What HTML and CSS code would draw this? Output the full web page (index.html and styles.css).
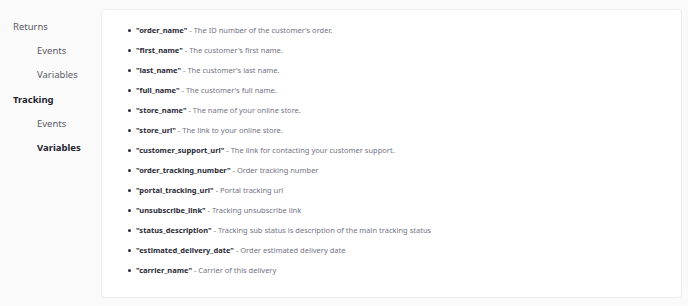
FILE: index.html
```html
<!DOCTYPE html>
<html lang="en">
<head>
<meta charset="UTF-8">
<meta name="viewport" content="width=device-width, initial-scale=1.0">
<title>Tracking variables</title>
<link rel="stylesheet" href="styles.css">
</head>
<body>

<div class="page">
<nav class="sidebar">
<a class="nav-group">Returns</a>
<a class="nav-item">Events</a>
<a class="nav-item">Variables</a>
<a class="nav-group active">Tracking</a>
<a class="nav-item">Events</a>
<a class="nav-item active">Variables</a>
</nav>

<section class="card">
<ul class="vars">
<li><b>"order_name"</b> - The ID number of the customer's order.</li>
<li><b>"first_name"</b> - The customer's first name.</li>
<li><b>"last_name"</b> - The customer's last name.</li>
<li><b>"full_name"</b> - The customer's full name.</li>
<li><b>"store_name"</b> - The name of your online store.</li>
<li><b>"store_url"</b> - The link to your online store.</li>
<li><b>"customer_support_url"</b> - The link for contacting your customer support.</li>
<li><b>"order_tracking_number"</b> - Order tracking number</li>
<li><b>"portal_tracking_url"</b> - Portal tracking url</li>
<li><b>"unsubscribe_link"</b> - Tracking unsubscribe link</li>
<li><b>"status_description"</b> - Tracking sub status is description of the main tracking status</li>
<li><b>"estimated_delivery_date"</b> - Order estimated delivery date</li>
<li><b>"carrier_name"</b> - Carrier of this delivery</li>
</ul>
</section>
</div>

</body>
</html>
```

FILE: styles.css
```css
body {
font-family: "Noto Sans", Arial, sans-serif;
background-color: #fafafa;
color: #737385;
margin: 0;
}
.page {
display: flex;
padding: 9px 6px 8px 0;
}
.sidebar {
width: 101px;
flex: none;
display: flex;
flex-direction: column;
padding-top: 10px;
font-size: 9.5px;
}
.sidebar a {
height: 24.2px;
line-height: 16px;
color: #5a5a66;
}
.nav-group {
padding-left: 13px;
}
.nav-item {
padding-left: 37px;
}
.sidebar a.active {
color: #24242e;
font-weight: 700;
}
.card {
flex: 1;
height: 289px;
background: #fff;
border: 1px solid #ecebf2;
border-radius: 4px;
box-sizing: border-box;
}
.vars {
margin: 0;
padding: 10px 0 0 26px;
list-style: none;
font-size: 7.5px;
}
.vars li {
height: 20px;
line-height: 16px;
display: flex;
align-items: center;
white-space: pre;
}
.vars li::before {
content: "";
width: 3px;
height: 3px;
border-radius: 50%;
background: #2a2a36;
margin-right: 5px;
}
.vars b {
color: #2a2a36;
font-weight: 700;
}
```
